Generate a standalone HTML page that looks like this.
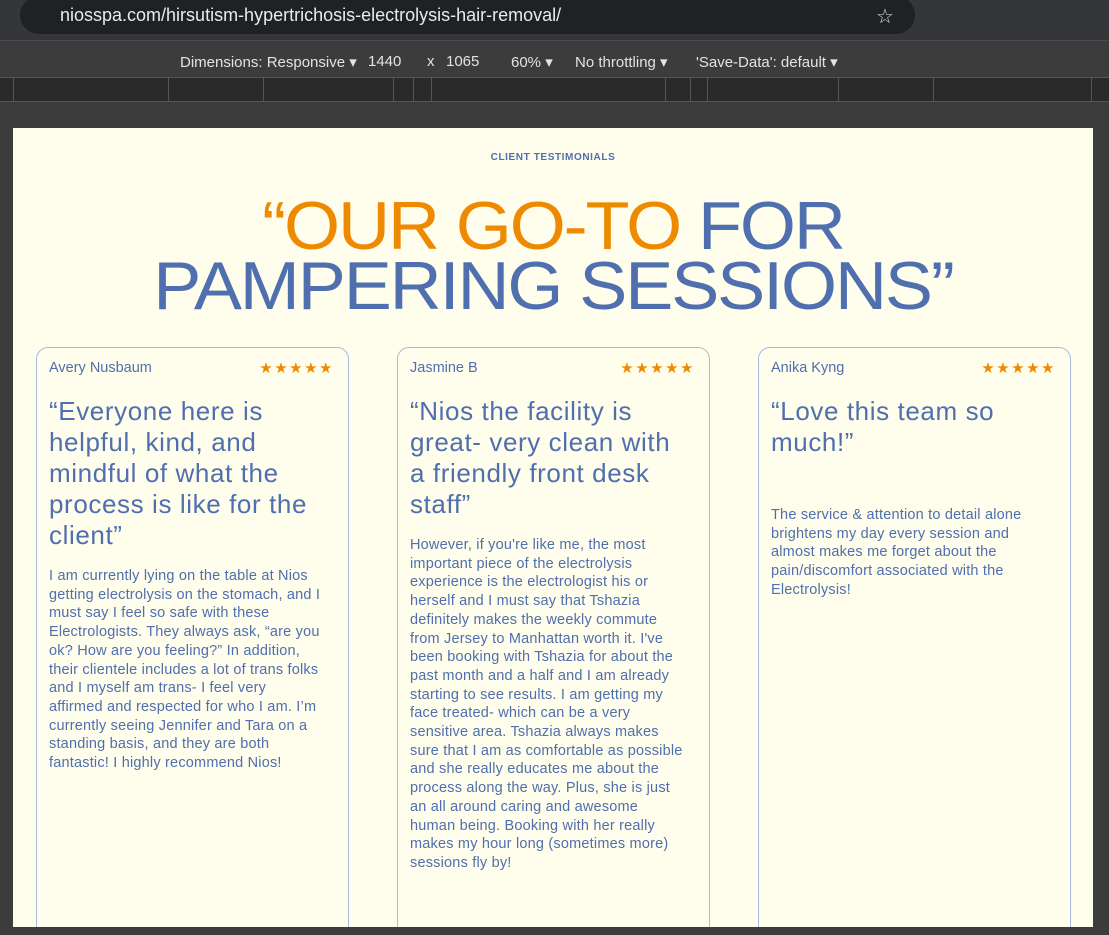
<!DOCTYPE html>
<html><head><meta charset="utf-8">
<style>
*{margin:0;padding:0;box-sizing:border-box}
body{width:1109px;height:935px;overflow:hidden;background:#3c3c3c;font-family:"Liberation Sans",sans-serif;position:relative}
.top{position:absolute;left:0;top:0;width:1109px;height:40px;background:#35363a}
.url{position:absolute;left:20px;top:-4px;width:895px;height:38px;border-radius:19px;background:#202124}
.url span{position:absolute;left:40px;top:9px;color:#e8eaed;font-size:18px}
.dev{position:absolute;left:0;top:40px;width:1109px;height:37px;background:#3c3c3c;border-top:1px solid #4a4a4a;color:#e3e3e3;font-size:15px}
.dev span{position:absolute;top:12px}
.ruler{position:absolute;left:0;top:77px;width:1109px;height:25px;background:#2a2a2a;border-top:1px solid #555;border-bottom:1px solid #555}
.ruler i{position:absolute;top:0;width:1px;height:23px;background:#555}
.page{position:absolute;left:13px;top:128px;width:1080px;height:799px;background:#fffdec;overflow:hidden}
.lbl{position:absolute;top:24px;width:100%;text-align:center;font-size:10px;font-weight:bold;letter-spacing:.6px;color:#4f6fae}
h1{position:absolute;top:68px;width:100%;text-align:center;font-size:68px;line-height:60px;font-weight:normal;color:#4f6fae;letter-spacing:-2px;transform:scaleX(1.06)}
h1 b{color:#ee8a00;font-weight:normal}
.card{position:absolute;top:219px;width:313px;height:640px;border:1px solid #a9b9d9;border-radius:12px;color:#4f6fae;padding:12px 24px 12px 12px}
.nm{font-size:14.5px}
.st{position:absolute;right:14px;top:11px;color:#ee8a00;font-size:15px;letter-spacing:1.5px}
.q{font-size:26px;line-height:31px;margin-top:20px;letter-spacing:0.6px}
.t{font-size:14.5px;line-height:18.7px;margin-top:16px;letter-spacing:0.2px}
</style></head><body>
<div class="top"><div class="url"><span>niosspa.com/hirsutism-hypertrichosis-electrolysis-hair-removal/</span></div>
<span style="position:absolute;left:876px;top:4px;color:#ddd;font-size:20px">☆</span></div>
<div class="dev"><span style="left:180px">Dimensions: Responsive ▾</span><span style="left:368px">1440</span><span style="left:427px">x</span><span style="left:446px">1065</span><span style="left:511px">60% ▾</span><span style="left:575px">No throttling ▾</span><span style="left:696px">'Save-Data': default ▾</span></div>
<div class="ruler"><i style="left:13px"></i><i style="left:168px"></i><i style="left:263px"></i><i style="left:393px"></i><i style="left:413px"></i><i style="left:431px"></i><i style="left:665px"></i><i style="left:690px"></i><i style="left:707px"></i><i style="left:838px"></i><i style="left:933px"></i><i style="left:1091px"></i></div>
<div class="page">
<div class="lbl">CLIENT TESTIMONIALS</div>
<h1><b>“OUR GO-TO</b> FOR<br>PAMPERING SESSIONS”</h1>
<div class="card" style="left:23px"><div class="nm">Avery Nusbaum</div><div class="st">★★★★★</div>
<div class="q">“Everyone here is helpful, kind, and mindful of what the process is like for the client”</div>
<div class="t">I am currently lying on the table at Nios getting electrolysis on the stomach, and I must say I feel so safe with these Electrologists. They always ask, “are you ok? How are you feeling?” In addition, their clientele includes a lot of trans folks and I myself am trans- I feel very affirmed and respected for who I am. I’m currently seeing Jennifer and Tara on a standing basis, and they are both fantastic! I highly recommend Nios!</div></div>
<div class="card" style="left:384px"><div class="nm">Jasmine B</div><div class="st">★★★★★</div>
<div class="q">“Nios the facility is great- very clean with a friendly front desk staff”</div>
<div class="t">However, if you're like me, the most important piece of the electrolysis experience is the electrologist his or herself and I must say that Tshazia definitely makes the weekly commute from Jersey to Manhattan worth it. I've been booking with Tshazia for about the past month and a half and I am already starting to see results. I am getting my face treated- which can be a very sensitive area. Tshazia always makes sure that I am as comfortable as possible and she really educates me about the process along the way. Plus, she is just an all around caring and awesome human being. Booking with her really makes my hour long (sometimes more) sessions fly by!</div></div>
<div class="card" style="left:745px"><div class="nm">Anika Kyng</div><div class="st">★★★★★</div>
<div class="q">“Love this team so much!”</div>
<div class="t" style="margin-top:48px">The service &amp; attention to detail alone brightens my day every session and almost makes me forget about the pain/discomfort associated with the Electrolysis!</div></div>
</div>
</body></html>
